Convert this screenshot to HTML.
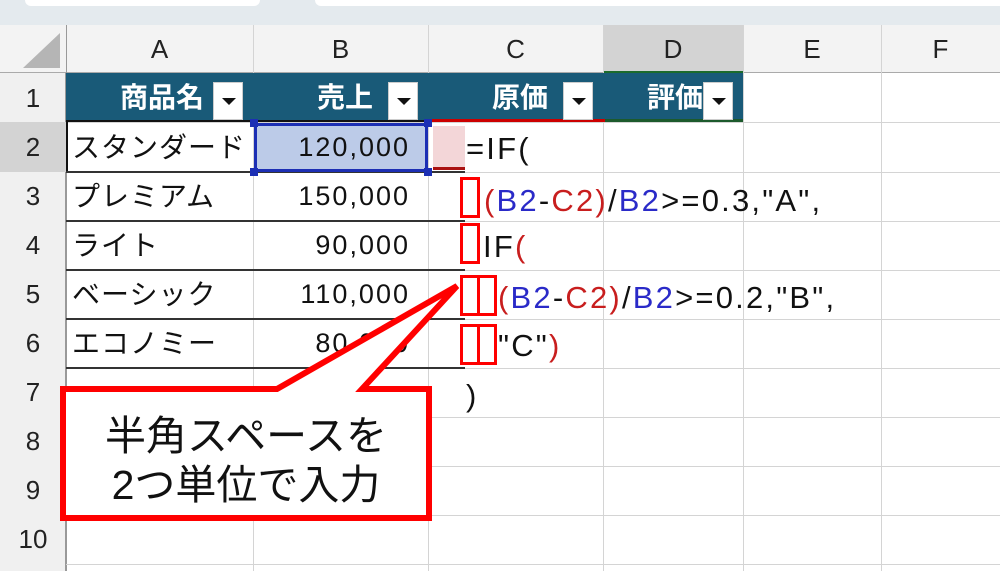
<!DOCTYPE html>
<html><head><meta charset="utf-8"><style>
*{margin:0;padding:0;box-sizing:border-box}
body{width:1000px;height:571px;background:#fff;position:relative;overflow:hidden;font-family:"Liberation Sans","Noto Sans CJK JP",sans-serif;color:#111}
.a{position:absolute}
.vl{position:absolute;top:25px;width:1px;height:546px;background:#d4d4d4}
.hl{position:absolute;left:66px;width:934px;height:1px;background:#d4d4d4}
.ch{position:absolute;top:25px;height:48px;font-size:26px;line-height:48px;text-align:center;color:#222}
.rh{position:absolute;left:0;width:66px;height:49px;font-size:26px;line-height:51px;text-align:center;color:#222}
.tx{position:absolute;font-size:28px;line-height:51px;white-space:nowrap;letter-spacing:1px}
.num{position:absolute;font-size:27px;line-height:51px;text-align:right;width:157px;left:253px;letter-spacing:2px}
.dd{position:absolute;top:82px;width:30px;height:38px;background:#fff;border:1px solid #ccc}
.dd:after{content:"";position:absolute;left:8px;top:15px;border-left:7px solid transparent;border-right:7px solid transparent;border-top:7px solid #111}
.hd{position:absolute;top:73px;height:49px;line-height:49px;color:#fff;font-size:28px;font-weight:bold}
.f{position:absolute;font-size:31px;line-height:49px;white-space:nowrap;color:#111;letter-spacing:2.2px}
.b{color:#2a2ac8}.r{color:#c81e1e}
.rb{position:absolute;border:3px solid #f00}
.blk{position:absolute;left:66px;width:399px;height:2px;background:#333}
</style></head><body>
<div class="a" style="left:0;top:0;width:1000px;height:25px;background:#e4eaee"></div>
<div class="a" style="left:25px;top:0;width:235px;height:6px;background:#fff;border-radius:0 0 8px 8px"></div>
<div class="a" style="left:315px;top:0;width:685px;height:6px;background:#fff;border-radius:0 0 0 8px"></div>
<div class="a" style="left:0;top:25px;width:1000px;height:48px;background:#f3f3f3;border-bottom:1px solid #aaa"></div>
<div class="a" style="left:603px;top:25px;width:140px;height:48px;background:#d3d3d3;border-bottom:2px solid #1c6b2c"></div>
<div class="a" style="left:0;top:73px;width:66px;height:498px;background:#f0f0f0;border-right:1px solid #999"></div>
<div class="a" style="left:0;top:122px;width:66px;height:50px;background:#d3d3d3"></div>
<svg class="a" style="left:20px;top:30px" width="42" height="40"><polygon points="40,3 40,38 3,38" fill="#b5b5b5"/></svg>
<div class="ch" style="left:66px;width:187px">A</div>
<div class="ch" style="left:253px;width:175px">B</div>
<div class="ch" style="left:428px;width:175px">C</div>
<div class="ch" style="left:603px;width:140px">D</div>
<div class="ch" style="left:743px;width:138px">E</div>
<div class="ch" style="left:881px;width:119px">F</div>
<div class="vl" style="left:66px;background:#999"></div>
<div class="vl" style="left:253px"></div><div class="vl" style="left:428px"></div><div class="vl" style="left:603px"></div><div class="vl" style="left:743px"></div><div class="vl" style="left:881px"></div>
<div class="hl" style="top:122px"></div><div class="hl" style="top:172px"></div><div class="hl" style="top:221px"></div><div class="hl" style="top:270px"></div><div class="hl" style="top:319px"></div><div class="hl" style="top:368px"></div><div class="hl" style="top:417px"></div><div class="hl" style="top:466px"></div><div class="hl" style="top:515px"></div><div class="hl" style="top:564px"></div>
<div class="rh" style="top:73px">1</div><div class="rh" style="top:122px">2</div><div class="rh" style="top:171px">3</div><div class="rh" style="top:220px">4</div><div class="rh" style="top:269px">5</div><div class="rh" style="top:318px">6</div><div class="rh" style="top:367px">7</div><div class="rh" style="top:416px">8</div><div class="rh" style="top:465px">9</div><div class="rh" style="top:514px">10</div>
<div class="a" style="left:66px;top:73px;width:677px;height:49px;background:#195a78;border-bottom:2px solid #111"></div>
<div class="a" style="left:430px;top:119px;width:175px;height:3px;background:#c00"></div>
<div class="a" style="left:605px;top:119px;width:138px;height:3px;background:#1c5a2c"></div>
<div class="hd" style="left:66px;width:138px;text-align:right">商品名</div>
<div class="hd" style="left:253px;width:120px;text-align:right">売上</div>
<div class="hd" style="left:428px;width:120px;text-align:right">原価</div>
<div class="hd" style="left:603px;width:100px;text-align:right">評価</div>
<div class="dd" style="left:213px"></div><div class="dd" style="left:388px"></div><div class="dd" style="left:563px"></div><div class="dd" style="left:703px"></div>
<div class="a" style="left:66px;top:122px;width:2px;height:50px;background:#111"></div>
<div class="blk" style="top:171px"></div><div class="blk" style="top:220px"></div><div class="blk" style="top:269px"></div><div class="blk" style="top:318px"></div><div class="blk" style="top:367px"></div>
<div class="a" style="left:254px;top:123px;width:174px;height:49px;background:#bccbe8;border:3px solid #1c2fb4"></div>
<div class="a" style="left:250px;top:119px;width:8px;height:8px;background:#1c2fb4"></div><div class="a" style="left:424px;top:119px;width:8px;height:8px;background:#1c2fb4"></div><div class="a" style="left:250px;top:168px;width:8px;height:8px;background:#1c2fb4"></div><div class="a" style="left:424px;top:168px;width:8px;height:8px;background:#1c2fb4"></div>
<div class="a" style="left:433px;top:126px;width:32px;height:44px;background:#f3d6d8;border-bottom:3px solid #a11"></div>
<div class="tx" style="left:72px;top:122px">スタンダード</div>
<div class="tx" style="left:72px;top:171px">プレミアム</div>
<div class="tx" style="left:72px;top:220px">ライト</div>
<div class="tx" style="left:72px;top:269px">ベーシック</div>
<div class="tx" style="left:72px;top:318px">エコノミー</div>
<div class="num" style="top:122px">120,000</div>
<div class="num" style="top:171px">150,000</div>
<div class="num" style="top:220px">90,000</div>
<div class="num" style="top:269px">110,000</div>
<div class="num" style="top:318px">80,000</div>
<div class="f" style="left:466px;top:124px">=IF(</div>
<div class="f" style="left:484px;top:176px"><span class="r">(</span><span class="b">B2</span>-<span class="r">C2</span><span class="r">)</span>/<span class="b">B2</span>&gt;=0.3,"A",</div>
<div class="f" style="left:483px;top:222px">IF<span class="r">(</span></div>
<div class="f" style="left:498px;top:273px"><span class="r">(</span><span class="b">B2</span>-<span class="r">C2</span><span class="r">)</span>/<span class="b">B2</span>&gt;=0.2,"B",</div>
<div class="f" style="left:498px;top:321px">"C"<span class="r">)</span></div>
<div class="f" style="left:466px;top:371px">)</div>
<div class="rb" style="left:460px;top:177px;width:20px;height:41px"></div>
<div class="rb" style="left:460px;top:223px;width:20px;height:41px"></div>
<div class="rb" style="left:460px;top:275px;width:20px;height:41px"></div><div class="rb" style="left:477px;top:275px;width:20px;height:41px"></div>
<div class="rb" style="left:460px;top:324px;width:20px;height:41px"></div><div class="rb" style="left:477px;top:324px;width:20px;height:41px"></div>
<svg class="a" style="left:0;top:0" width="1000" height="571">
<path d="M63,389 L277,389 L457,286 L362,389 L429,389 L429,518 L63,518 Z" fill="#fff" stroke="#f00" stroke-width="6" stroke-linejoin="miter"/>
</svg>
<div class="a" style="left:63px;top:412px;width:366px;text-align:center;font-size:41px;line-height:49px;color:#111">半角スペースを<br>2つ単位で入力</div>
</body></html>
